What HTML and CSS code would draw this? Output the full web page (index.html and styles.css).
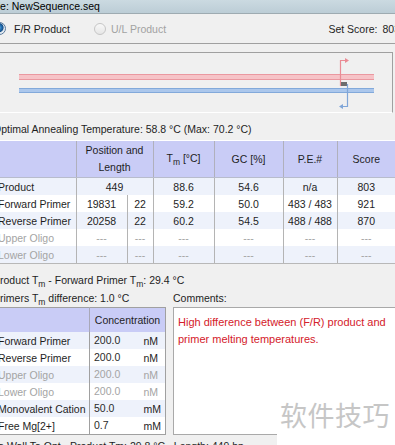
FILE: index.html
```html
<!DOCTYPE html>
<html lang="en">
<head>
    <meta charset="UTF-8">
    <meta name="viewport" content="width=device-width, initial-scale=1.0">
    <title>NewSequence.seq</title>
    <link rel="stylesheet" href="styles.css">
</head>
<body>
    <div class="window">
        <div class="titlebar">File: NewSequence.seq</div>

        <div class="modebar">
            <span class="radio checked"></span><span class="radio-label first">F/R Product</span>
            <span class="radio off"></span><span class="radio-label off">U/L Product</span>
            <span class="set-score">Set Score:<span class="score-val">803</span></span>
        </div>

        <div class="map">
            <svg width="407" height="59" viewBox="-14 53 407 59">
                <rect x="19" y="74" width="355" height="6" fill="#ea98a0"/>
                <rect x="19" y="75" width="355" height="4" fill="#f6c3c7"/>
                <rect x="19" y="88" width="355" height="5" fill="#82a9da"/>
                <rect x="19" y="89" width="355" height="3" fill="#abc7ec"/>
                <path d="M340.5 86 V60.5 H345" stroke="#ea8c95" stroke-width="1.2" fill="none"/>
                <path d="M345 58 L349 60.5 L345 63 Z" fill="#ea8c95"/>
                <rect x="341" y="82" width="6" height="4" fill="#6c6c6c"/>
                <path d="M347.5 84 V106.5 H343" stroke="#80a6d8" stroke-width="1.2" fill="none"/>
                <path d="M343 104 L339 106.5 L343 109 Z" fill="#80a6d8"/>
            </svg>
        </div>

        <div class="anneal">Optimal Annealing Temperature: 58.8 °C (Max: 70.2 °C)</div>

        <div class="results-wrap">
            <table class="results">
                <colgroup>
                    <col style="width:90px"><col style="width:51px"><col style="width:26px">
                    <col style="width:61px"><col style="width:69px"><col style="width:54px"><col style="width:58px">
                </colgroup>
                <thead>
                    <tr>
                        <th></th>
                        <th colspan="2">Position and<br>Length</th>
                        <th>T<span class="sub">m</span> [°C]</th>
                        <th>GC [%]</th>
                        <th>P.E.#</th>
                        <th>Score</th>
                    </tr>
                </thead>
                <tbody>
                    <tr class="alt">
                        <td class="name">Product</td><td colspan="2">449</td><td>88.6</td><td>54.6</td><td>n/a</td><td>803</td>
                    </tr>
                    <tr>
                        <td class="name">Forward Primer</td><td>19831</td><td>22</td><td>59.2</td><td>50.0</td><td>483 / 483</td><td>921</td>
                    </tr>
                    <tr class="alt">
                        <td class="name">Reverse Primer</td><td>20258</td><td>22</td><td>60.2</td><td>54.5</td><td>488 / 488</td><td>870</td>
                    </tr>
                    <tr class="off">
                        <td class="name">Upper Oligo</td><td>---</td><td>---</td><td>---</td><td>---</td><td>---</td><td>---</td>
                    </tr>
                    <tr class="alt off">
                        <td class="name">Lower Oligo</td><td>---</td><td>---</td><td>---</td><td>---</td><td>---</td><td>---</td>
                    </tr>
                </tbody>
            </table>
        </div>

        <div class="diff">Product T<span class="sub">m</span> - Forward Primer T<span class="sub">m</span>: 29.4 °C</div>

        <div class="lower">
            <div class="diff second">Primers T<span class="sub">m</span> difference: 1.0 °C</div>
            <div class="comments-label">Comments:</div>

            <table class="conc">
                <colgroup>
                    <col style="width:103px"><col style="width:51px"><col style="width:25px">
                </colgroup>
                <thead>
                    <tr><th></th><th colspan="2">Concentration</th></tr>
                </thead>
                <tbody>
                    <tr class="alt"><td class="name">Forward Primer</td><td class="val">200.0</td><td class="unit">nM</td></tr>
                    <tr><td class="name">Reverse Primer</td><td class="val">200.0</td><td class="unit">nM</td></tr>
                    <tr class="alt off"><td class="name">Upper Oligo</td><td class="val">200.0</td><td class="unit">nM</td></tr>
                    <tr class="off"><td class="name">Lower Oligo</td><td class="val">200.0</td><td class="unit">nM</td></tr>
                    <tr class="alt"><td class="name">Monovalent Cation</td><td class="val">50.0</td><td class="unit">mM</td></tr>
                    <tr><td class="name">Free Mg[2+]</td><td class="val">0.7</td><td class="unit">mM</td></tr>
                </tbody>
            </table>

            <div class="comments">High difference between (F/R) product and<br>primer melting temperatures.</div>
        </div>

        <div class="footer">Ta Wall Ta Opt - Product Tm: 29.8 °C   Length: 449 bp</div>
    </div>

    <div class="watermark">软件技巧</div>
</body>
</html>
```

FILE: styles.css
```css
body { margin: 0; overflow: hidden; background-color: #f0f0f0; color: #1e1e1e;
    font-family: "Liberation Sans", Arial, sans-serif; font-size: 10.5px; }
.window { width: 430px; margin-left: -14px; }

.titlebar { height: 13px; line-height: 13px; padding-left: 3px; color: #000;
    background: linear-gradient(#cbdae1, #bccdd6); border-bottom: 1px solid #9eabb1; }

.modebar { height: 29px; display: flex; align-items: center; border-bottom: 1px solid #a0a0a0; padding-left: 7px; }
.radio { width: 12px; height: 12px; border-radius: 50%; box-sizing: border-box; flex: none; }
.radio.checked { width: 13px; height: 13px; border: 1px solid #55779a;
    background: radial-gradient(circle at 45% 42%, #8fd0f2 0, #2a7cc0 2px, #184f88 4.2px, #d6e0ea 5px, #f4f6f9 6.5px); }
.radio.off { border: 1px solid #c6c6c6; background: linear-gradient(#f8f8f8, #e6e6e6); margin-left: 24px; }
.radio-label { margin-left: 6px; }
.radio-label.first { margin-left: 8px; }
.radio-label.off { color: #a2a2a2; margin-left: 5px; }
.set-score { margin-left: auto; padding-right: 16px; }
.score-val { margin-left: 5px; }

.map { margin-top: 8px; height: 59px; margin-right: 23px; border-top: 1px solid #a0a0a0;
    border-right: 1px solid #a0a0a0; border-bottom: 1px solid #fff; }
.map svg { display: block; }

.anneal { padding: 9px 0 4px 7px; line-height: 14px; }

.sub { font-size: 8.5px; position: relative; top: 3px; }

.results-wrap { border-top: 1px solid #fff; border-bottom: 1px solid #b8b8b8; }
.results { width: 409px; table-layout: fixed; border-collapse: collapse; }
.results th { height: 36px; padding: 0; line-height: 17px; font-weight: normal; background-color: #c9ccf6;
    border-left: 1px solid #b0b0bc; border-bottom: 1px solid #b8bccc; }
.results td { padding: 2px 0 0; line-height: 15px; text-align: center; border-left: 1px solid #b4b4b4; white-space: nowrap; overflow: hidden; }
.results th:first-child, .results td:first-child { border-left: none; }
.results td.name { text-align: left; padding-left: 12px; }

tr.alt td { background-color: #eef2fb; }
tr td { background-color: #fff; }
tr.off td { color: #a4a4a4; }

.diff { padding: 9px 0 0 7px; line-height: 14px; }
.diff.second { padding-top: 3px; }

.lower { display: grid; grid-template-columns: 179px 1fr; column-gap: 8px; row-gap: 1px; }
.comments-label { padding-top: 3px; line-height: 14px; }

.conc { width: 179px; table-layout: fixed; border-collapse: collapse; border: 1px solid #a0a0a0; }
.conc th { height: 24px; padding: 0; font-weight: normal; background-color: #c9ccf6; border-left: 1px solid #a8a8b8; }
.conc th:first-child { border-left: none; }
.conc td { padding: 2px 0 0; line-height: 15px; white-space: nowrap; overflow: hidden; }
.conc td.name { padding-left: 11px; }
.conc td.val { padding: 1px 0 1px 4px; border-left: 1px solid #a0a0a0; color: #2a2a2a; }
.conc td.unit { padding-left: 3px; }
.conc tr.off td { color: #a4a4a4; }

.comments { background-color: #fff; border: 1px solid #a9a9a9; padding: 6px 0 0 4px;
    line-height: 17px; font-size: 11px; color: #d4202a; white-space: nowrap; }

.footer { padding: 4px 0 0 7px; line-height: 14px; white-space: pre; }

.watermark { position: absolute; left: 277px; top: 396px; width: 118px; height: 49px; background-color: #fff;
    font-family: "Noto Sans CJK SC", sans-serif; font-size: 27px; line-height: 38px; color: #c6c6c6;
    padding-left: 3px; box-sizing: border-box; letter-spacing: 0.5px; }
```
